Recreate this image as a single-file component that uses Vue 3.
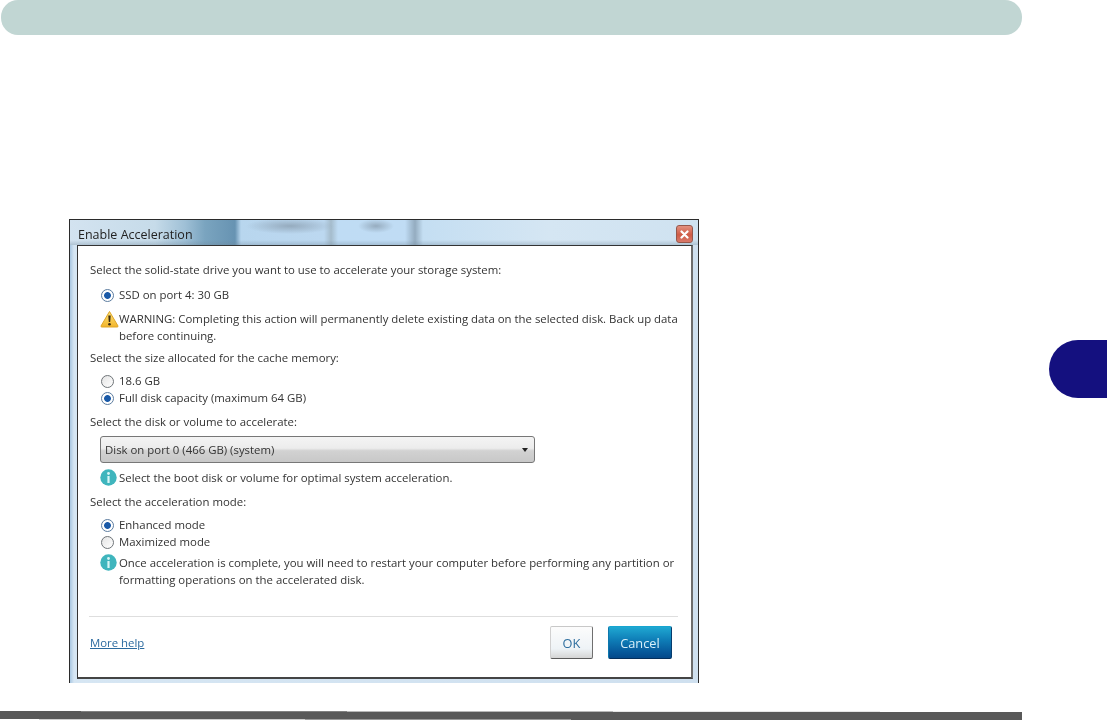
<script setup>
const strip = [
  [[81, '#595959'], [266, '#808080'], [266, '#b8b8b8'], [267, '#e6e6e6'], [142, '#ffffff']],
  [[1022, '#595959']],
  [[39, '#ffffff'], [266, '#cfcfcf'], [266, '#9a9a9a'], [451, '#595959']],
]
</script>

<template>
  <div class="page">
    <div class="top-bar"></div>

    <section class="dialog">
      <header class="titlebar">
        <span class="title">Enable Acceleration</span>
        <button class="close" aria-label="Close">
          <svg width="9" height="9" viewBox="0 0 9 9"><path d="M1.5 1.5l6 6M7.5 1.5l-6 6" stroke="#fff" stroke-width="2.2" stroke-linecap="round"/></svg>
        </button>
      </header>

      <div class="body">
        <p class="line first">Select the solid-state drive you want to use to accelerate your storage system:</p>

        <label class="option ssd"><span class="radio on"></span>SSD on port 4: 30 GB</label>

        <div class="note warn">
          <svg class="note-icon" width="19" height="18" viewBox="0 0 19 18">
            <defs>
              <linearGradient id="warnFill" x1="0" y1="0" x2="0" y2="1">
                <stop offset="0" stop-color="#fbe37a"/>
                <stop offset="1" stop-color="#f2b52c"/>
              </linearGradient>
            </defs>
            <path d="M9.5 1.5L18 16a.8.8 0 0 1-.7 1H1.7a.8.8 0 0 1-.7-1z" fill="url(#warnFill)" stroke="#e0a526" stroke-width="1"/>
            <path d="M8.300 5.500h2.400l-.5 6.500H8.800z" fill="#3a2a10"/>
            <circle cx="9.500" cy="14.300" r="1.300" fill="#3a2a10"/>
          </svg>
          <p>WARNING: Completing this action will permanently delete existing data on the selected disk. Back up data<br>before continuing.</p>
        </div>

        <p class="line size">Select the size allocated for the cache memory:</p>
        <label class="option size-a"><span class="radio"></span>18.6 GB</label>
        <label class="option tight"><span class="radio on"></span>Full disk capacity (maximum 64 GB)</label>

        <p class="line disk">Select the disk or volume to accelerate:</p>
        <div class="combo">
          <span>Disk on port 0 (466 GB) (system)</span>
          <i class="arrow"></i>
        </div>

        <div class="note hint">
          <svg class="note-icon info" width="17" height="17" viewBox="0 0 17 17">
            <circle cx="8.500" cy="8.500" r="8.200" fill="#3fb5bd"/>
            <path d="M7.400 7h2.200v7H7.400z" fill="#d8f6f6"/>
            <circle cx="8.500" cy="4.500" r="1.400" fill="#d8f6f6"/>
          </svg>
          <p>Select the boot disk or volume for optimal system acceleration.</p>
        </div>

        <p class="line mode">Select the acceleration mode:</p>
        <label class="option mode-a"><span class="radio on"></span>Enhanced mode</label>
        <label class="option tight"><span class="radio"></span>Maximized mode</label>

        <div class="note once">
          <svg class="note-icon info" width="17" height="17" viewBox="0 0 17 17">
            <circle cx="8.500" cy="8.500" r="8.200" fill="#3fb5bd"/>
            <path d="M7.400 7h2.200v7H7.400z" fill="#d8f6f6"/>
            <circle cx="8.500" cy="4.500" r="1.400" fill="#d8f6f6"/>
          </svg>
          <p>Once acceleration is complete, you will need to restart your computer before performing any partition or<br>formatting operations on the accelerated disk.</p>
        </div>

        <hr class="rule">

        <footer class="footer">
          <a class="help">More help</a>
          <div class="buttons">
            <button class="btn ok">OK</button>
            <button class="btn cancel">Cancel</button>
          </div>
        </footer>
      </div>
    </section>

    <div class="strip">
      <div v-for="(row, r) in strip" :key="r" class="strip-row" :class="'row' + r">
        <span v-for="(seg, s) in row" :key="s" :style="{ width: seg[0] + 'px', background: seg[1] }"></span>
      </div>
    </div>

    <div class="tab"></div>
  </div>
</template>

<style>
html, body { margin: 0; background: #fff; overflow: hidden; }
</style>

<style scoped>
.page {
  position: relative;
  width: 1107px;
  height: 721px;
  overflow: hidden;
  background: #fff;
  font-family: "Open Sans", "Liberation Sans", sans-serif;
  font-size: 11.4px;
  color: #333;
}
.top-bar {
  width: 1021px;
  height: 35px;
  margin-left: 1px;
  border-radius: 17px;
  background: #c1d6d3;
}
.dialog {
  box-sizing: border-box;
  width: 630px;
  height: 464px;
  margin: 184px 0 0 69px;
  padding: 0 5px 4px 7px;
  display: flex;
  flex-direction: column;
  border: 1px solid #2b2b2b;
  border-bottom: 0;
  background: linear-gradient(90deg, #a9c7e2 0, #d6e6f3 4px, #cfe0ef 100%);
  filter: blur(0.4px);
}
.titlebar {
  box-sizing: border-box;
  height: 25px;
  flex: none;
  margin: 0 -5px 0 -7px;
  padding: 3px 5px 0 8px;
  display: flex;
  align-items: center;
  justify-content: space-between;
  background:
    radial-gradient(ellipse 44px 8px at 220px 6px, rgba(140, 160, 178, 0.8), transparent),
    radial-gradient(ellipse 18px 7px at 306px 6px, rgba(140, 160, 178, 0.8), transparent),
    linear-gradient(rgba(255, 255, 255, 0) 80%, rgba(110, 135, 155, 0.35)),
    linear-gradient(90deg,
      #d3e3f0 0, #c6dbe9 85px, #9fc0d6 115px, #7aa4bf 135px, #6793b2 165px, #b8d6ee 171px,
      #bcd8f0 254px, #a5bccc 261px, #bfdcf4 268px, #c0dcf4 335px,
      #94acc0 345px, #c4def2 353px, #d5e6f3 480px, #cfe2f0 630px);
}
.title {
  font-size: 12.5px;
  color: #222;
}
.close {
  box-sizing: border-box;
  width: 17px;
  height: 18px;
  padding: 0;
  display: flex;
  align-items: center;
  justify-content: center;
  border: 1px solid #96574b;
  border-radius: 3px;
  background: linear-gradient(#e2907f, #cf5b45 55%, #d8796a);
}
.body {
  flex: 1;
  min-height: 0;
  box-sizing: border-box;
  padding: 16px 13px 0 12px;
  background: #fff;
  border: 1px solid #333;
  border-right: 2px solid #6d6d6d;
  border-bottom: 2px solid #444;
}
p { margin: 0; }
.line { line-height: 16px; height: 16px; white-space: nowrap; }
.option {
  display: flex;
  align-items: center;
  height: 16px;
  line-height: 16px;
  margin-left: 11px;
  white-space: nowrap;
}
.ssd { margin-top: 9px; }
.tight { margin-top: 1px; }
.size { margin-top: 5px; }
.size-a { margin-top: 7px; }
.disk { margin-top: 8px; }
.mode { margin-top: 7px; }
.mode-a { margin-top: 7px; }
.radio {
  box-sizing: border-box;
  flex: none;
  width: 13px;
  height: 13px;
  margin-right: 5px;
  border: 1px solid #6f7478;
  border-radius: 50%;
  background: linear-gradient(135deg, #e4e4e4, #fff);
}
.radio.on {
  border-color: #5d7da0;
  background: radial-gradient(circle, #1a5aa8 0, #1a5aa8 3px, #fff 3.8px);
}
.note {
  position: relative;
  margin-left: 29px;
  line-height: 17px;
  white-space: nowrap;
}
.note p { margin-top: -1px; }
.note-icon { position: absolute; left: -19px; top: 0; }
.warn { margin-top: 8px; }
.hint { margin-top: 7px; }
.once { margin-top: 5px; }
.combo {
  box-sizing: border-box;
  width: 435px;
  height: 27px;
  margin: 6px 0 0 10px;
  padding: 0 5px 0 4px;
  display: flex;
  align-items: center;
  justify-content: space-between;
  border: 1px solid #777;
  border-radius: 3px;
  background: linear-gradient(#f4f4f4, #ececec 45%, #d2d2d2 55%, #c8c8c8);
}
.arrow {
  width: 0;
  height: 0;
  margin-right: 1px;
  border: 3.5px solid transparent;
  border-top: 4px solid #222;
  border-bottom: 0;
}
.hint + .mode { margin-top: 8px; }
.warn + .size { margin-top: 6px; }
.once + .rule { margin-top: 28px; }
.rule {
  height: 1px;
  margin: 27px 0 0 -1px;
  border: 0;
  background: #dedede;
}
.footer {
  display: flex;
  justify-content: space-between;
  align-items: center;
  margin-top: 9px;
  padding-right: 6px;
}
.help {
  color: #2b6a9f;
  text-decoration: underline;
}
.buttons { display: flex; gap: 15px; }
.btn {
  box-sizing: border-box;
  height: 33px;
  padding: 0;
  font: 12.8px "Open Sans", "Liberation Sans", sans-serif;
  border: 1px solid #8a8a8a;
  border-radius: 2px;
}
.ok {
  width: 43px;
  color: #2f6f9f;
  border-color: #c8c8c8 #6f6f6f #5a5a5a #d0d0d0;
  background: linear-gradient(#fcfcfc, #eef3f6 70%, #d5d5d5);
}
.cancel {
  width: 64px;
  color: #d8f0fa;
  border-color: #17a5d0 #063c6d #052f5c #0d78ad;
  background: linear-gradient(#1fa8d2, #0f7fb8 40%, #07599b 80%, #05498a);
}
.strip { margin-top: 28px; width: 1022px; }
.strip-row { display: flex; height: 1px; }
.strip-row.row1 { height: 7px; }
.tab {
  position: absolute;
  left: 1049px;
  top: 340px;
  width: 58px;
  height: 58px;
  border-radius: 29px 0 0 29px;
  background: #14107f;
}
</style>
